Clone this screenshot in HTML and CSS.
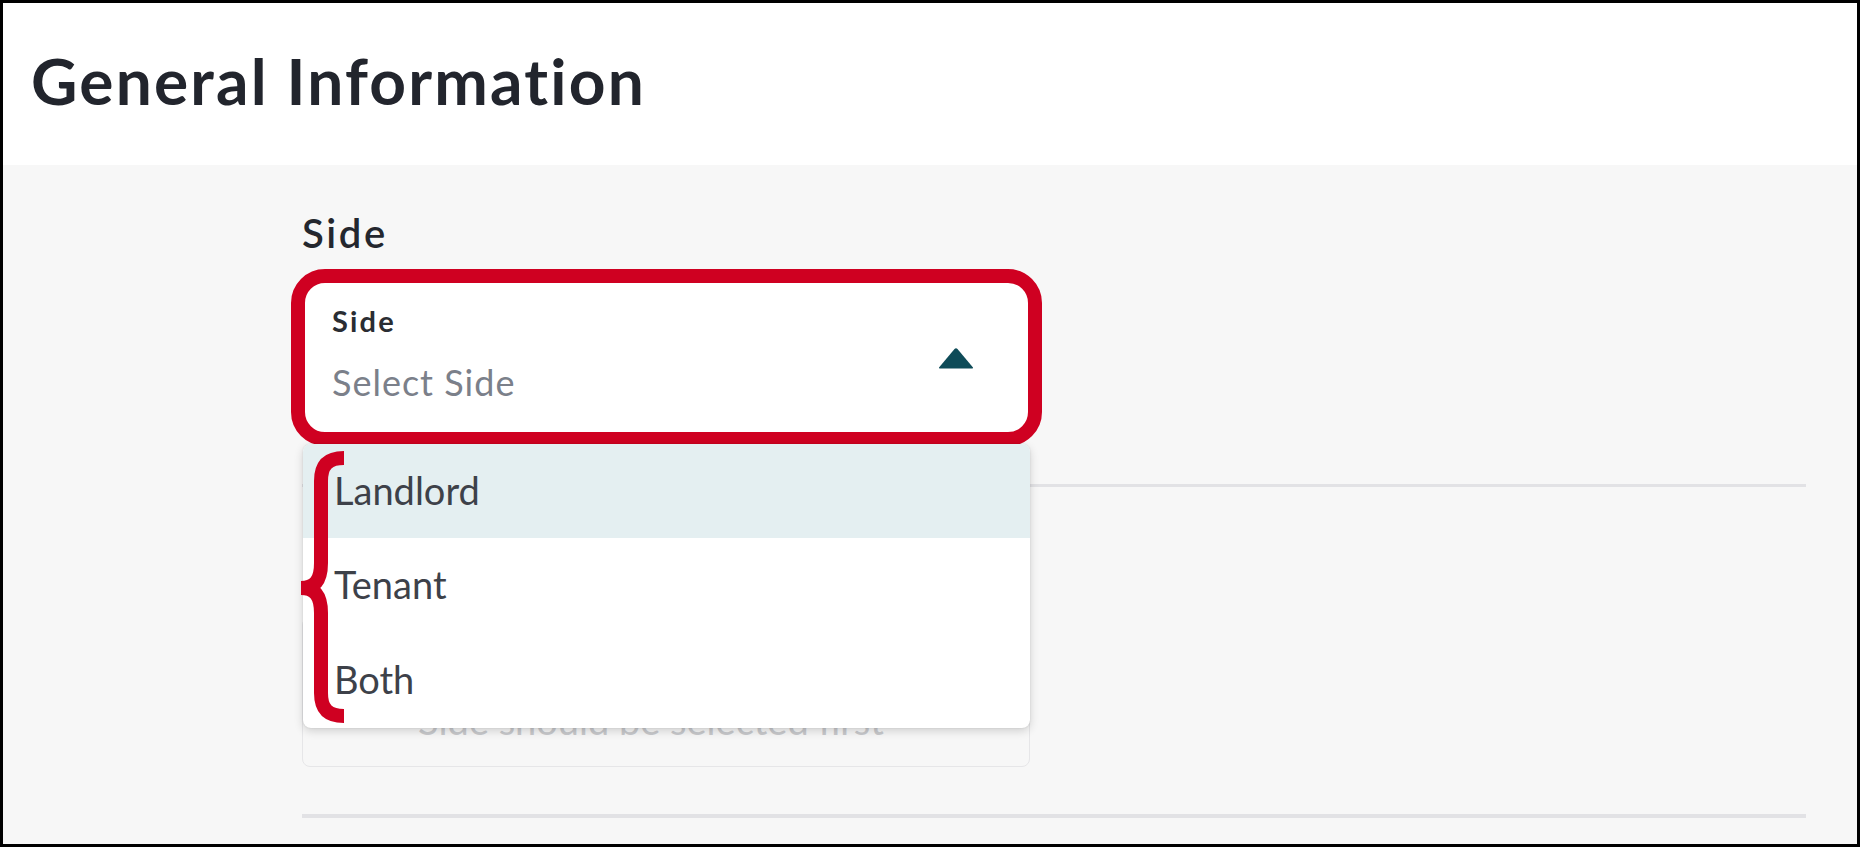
FILE: index.html
```html
<!DOCTYPE html>
<html lang="en">
<head>
<meta charset="utf-8">
<title>General Information</title>
<link rel="stylesheet" href="styles.css">
</head>
<body>
<div class="frame">
  <header class="header">
    <h1 class="title">General Information</h1>
  </header>
  <main class="content">
    <h2 class="section-label">Side</h2>
    <div class="field">
      <div class="select">
        <div class="select-text">
          <div class="select-label">Side</div>
          <div class="select-placeholder">Select Side</div>
        </div>
        <svg class="caret" width="40" height="23" viewBox="0 0 40 23" aria-hidden="true">
          <path d="M3 21.5 L18.5 3 Q20 1.5 21.5 3 L37 21.5 Q37.5 22.5 36 22.5 L4 22.5 Q2.5 22.5 3 21.5 Z" fill="#0e4b58"/>
        </svg>
      </div>
      <ul class="menu">
        <li class="menu-item is-active">Landlord</li>
        <li class="menu-item">Tenant</li>
        <li class="menu-item">Both</li>
      </ul>
      <svg class="brace" width="52" height="272" viewBox="0 0 52 272" aria-hidden="true">
        <path d="M51,7 C35,7 28,14 28,30 L28,112 C28,129 22,137 8,137 C22,137 28,145 28,162 L28,242 C28,258 35,265 51,265" fill="none" stroke="#cf0021" stroke-width="14"/>
      </svg>
    </div>
    <hr class="divider first">
    <div class="disabled-field">
      <span class="disabled-text">Side should be selected first</span>
    </div>
    <hr class="divider second">
  </main>
</div>
</body>
</html>
```
FILE: styles.css
```css
html, body {
  margin: 0;
  padding: 0;
}

body {
  font-family: "Lato", "Open Sans", sans-serif;
  color: #24272e;
}

.frame {
  width: 1860px;
  height: 847px;
  box-sizing: border-box;
  border: 3px solid #000;
  background: #f7f7f7;
  overflow: hidden;
  position: relative;
}

.header {
  background: #fff;
  height: 162px;
  box-sizing: border-box;
  padding: 40px 0 0 28px;
}

.title {
  margin: 0;
  font-size: 64px;
  line-height: 1.2;
  font-weight: 700;
  letter-spacing: 2.2px;
  color: #22252d;
}

.content {
  padding: 0 51px 0 299px;
}

.section-label {
  margin: 44px 0 12px 0;
  font-size: 40px;
  line-height: 1.2;
  font-weight: 600;
  letter-spacing: 2.6px;
  color: #24272e;
}

.field {
  position: relative;
  width: 751px;
  margin-left: -11px;
}

.select {
  box-sizing: border-box;
  width: 751px;
  height: 177px;
  border: 14px solid #cf0021;
  border-radius: 34px;
  background: #fff;
  display: flex;
  align-items: center;
  justify-content: space-between;
  padding: 0 52px 0 27px;
}

.select-text {
  display: flex;
  flex-direction: column;
  align-self: flex-start;
  padding-top: 21px;
}

.select-label {
  font-size: 29px;
  line-height: 1.2;
  font-weight: 700;
  letter-spacing: 2.2px;
  color: #2a2d33;
}

.select-placeholder {
  margin-top: 22px;
  font-size: 36px;
  line-height: 1.2;
  letter-spacing: 1px;
  color: #7b808a;
}

.caret {
  display: block;
}

.menu {
  position: absolute;
  top: 175px;
  left: 12px;
  width: 727px;
  margin: 0;
  padding: 0;
  list-style: none;
  background: #fff;
  border-radius: 8px;
  box-shadow: 0 3px 10px rgba(0, 0, 0, 0.16), 0 0 2px rgba(0, 0, 0, 0.12);
  overflow: hidden;
  z-index: 2;
}

.menu-item {
  height: 94px;
  display: flex;
  align-items: center;
  padding-left: 31px;
  font-size: 38px;
  line-height: 1.2;
  color: #3d4149;
}

.menu-item:last-child {
  height: 96px;
}

.menu-item.is-active {
  background: #e4eff1;
}

.brace {
  position: absolute;
  top: 182px;
  left: 2px;
  z-index: 3;
}

.divider {
  border: 0;
  height: 3px;
  background: #e2e2e5;
  margin: 0;
}

.divider.first {
  margin-top: 38px;
}

.disabled-field {
  box-sizing: border-box;
  width: 728px;
  height: 150px;
  margin-top: 130px;
  border: 1px solid #e6e6e8;
  border-radius: 8px;
  background: #f7f7f7;
  display: flex;
  align-items: flex-end;
  justify-content: center;
  padding: 0 30px 22px 0;
}

.disabled-text {
  font-size: 38px;
  line-height: 1.2;
  color: #c9cacd;
}

.divider.second {
  margin-top: 47px;
  height: 4px;
}
```
